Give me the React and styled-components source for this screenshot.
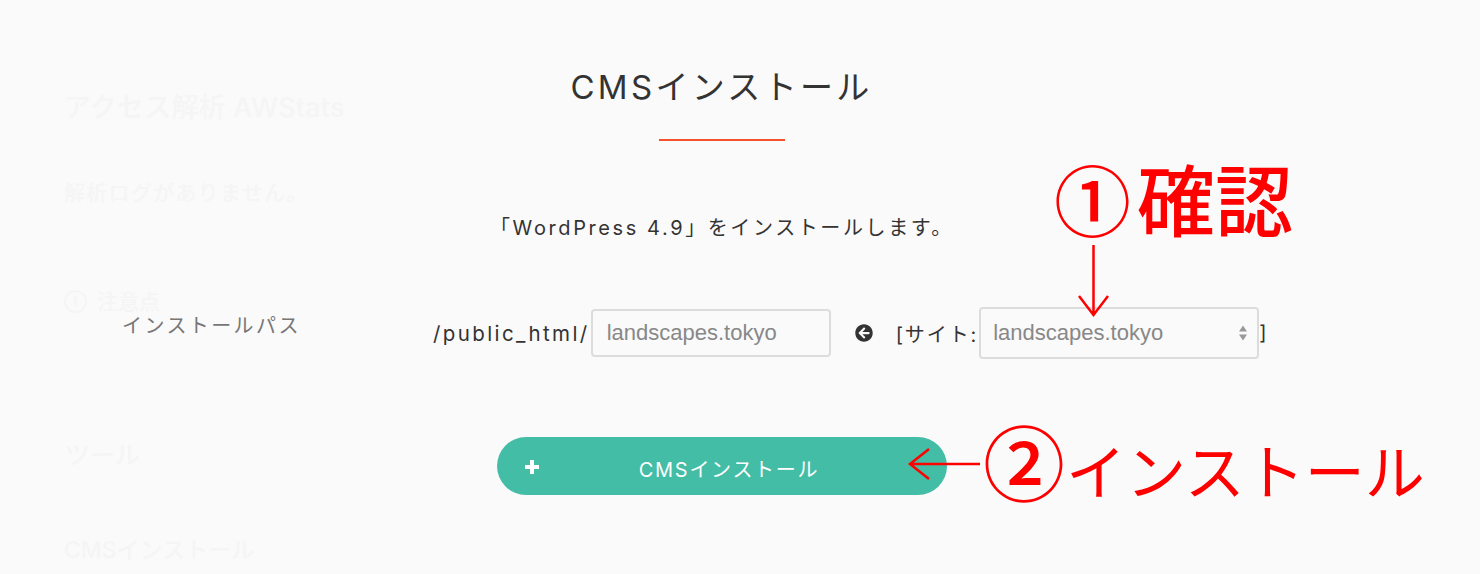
import React from 'react'
import styled, { createGlobalStyle } from 'styled-components'
import { FaArrowCircleLeft } from 'react-icons/fa'

const FONT = '"Noto Sans CJK JP", "Inter", sans-serif'
const LATIN = '"Inter", "Noto Sans CJK JP", sans-serif'
const HELVETICA = '"Liberation Sans", "Noto Sans CJK JP", sans-serif'

const GlobalStyle = createGlobalStyle`
  html, body {
    margin: 0;
    padding: 0;
    background: #fafafa;
  }
  * {
    box-sizing: border-box;
  }
`

const Page = styled.div`
  position: relative;
  width: 1480px;
  height: 574px;
  overflow: hidden;
  background: #fafafa;
  font-family: ${LATIN};
  color: #333;
`

// sidebar that shows through the white overlay
const Backdrop = styled.div`
  position: absolute;
  top: 0;
  left: 64px;
  color: #f5f5f5;
  font-weight: 500;
`

const GhostLine = styled.div`
  position: absolute;
  left: ${p => p.$left || 0}px;
  top: ${p => p.$top}px;
  font-size: ${p => p.$size}px;
  line-height: 30px;
  letter-spacing: ${p => p.$spacing || 0}px;
  white-space: nowrap;
`

const GhostBadge = styled.div`
  position: absolute;
  left: 0;
  top: 290px;
  display: flex;
  align-items: center;
  justify-content: center;
  width: 23px;
  height: 23px;
  border: 2px solid #f5f5f5;
  border-radius: 50%;
  font-size: 15px;
  font-weight: 700;
`

const Dialog = styled.div`
  position: relative;
  display: flex;
  flex-direction: column;
  align-items: center;
  width: 1444px;
  padding-top: 66px;
`

const Title = styled.h2`
  margin: 0 0 0 -1px;
  font-size: 33px;
  font-weight: 400;
  line-height: 42px;
  letter-spacing: 3.3px;
  color: #333;
`

const Rule = styled.div`
  width: 126px;
  height: 2px;
  margin-top: 31px;
  background: #f4512c;
`

const Message = styled.p`
  margin: 73px 0 0;
  font-size: 20px;
  line-height: 28px;
  letter-spacing: 2.6px;
  color: #333;
`

const FormRow = styled.div`
  align-self: stretch;
  display: flex;
  align-items: center;
  height: 52px;
  margin-top: 65px;
  padding-left: 122px;
`

const FieldLabel = styled.div`
  width: 311px;
  margin-bottom: 18px;
  font-size: 20px;
  letter-spacing: 2.4px;
  color: #777;
`

const PathText = styled.span`
  font-size: ${p => p.$size || 20}px;
  letter-spacing: ${p => p.$spacing}px;
  color: #333;
  white-space: nowrap;
`

const TextInput = styled.input`
  width: 240px;
  height: 48px;
  margin-left: 1px;
  padding: 0 14px;
  border: 2px solid #dcdcdc;
  border-radius: 4px;
  background: #fafafa;
  font-family: ${HELVETICA};
  font-size: 22px;
  color: #888;
  outline: none;
`

const BackIcon = styled(FaArrowCircleLeft)`
  width: 18px;
  height: 18px;
  margin: 0 23px 0 24px;
  flex: none;
  color: #333;
`

const SelectBox = styled.div`
  display: flex;
  align-items: center;
  justify-content: space-between;
  width: 280px;
  height: 52px;
  margin-left: 1px;
  padding: 0 9px 0 12px;
  border: 2px solid #dcdcdc;
  border-radius: 4px;
  font-family: ${HELVETICA};
  font-size: 22px;
  color: #888;
`

const Updown = styled.svg`
  width: 10px;
  height: 18px;
`

const InstallButton = styled.button`
  position: relative;
  display: flex;
  align-items: center;
  justify-content: center;
  width: 450px;
  height: 58px;
  margin-top: 78px;
  padding: 5px 0 0 14px;
  border: 0;
  border-radius: 29px;
  background: #43bda6;
  color: #fff;
  font-family: ${LATIN};
  font-size: 20px;
  font-weight: 400;
  letter-spacing: 1.7px;
`

const PlusIcon = styled.svg`
  position: absolute;
  left: 27px;
  top: 22px;
  width: 16px;
  height: 16px;
`

// red notes someone drew on top of the screenshot
const Note = styled.div`
  position: absolute;
  left: ${p => p.$left}px;
  top: ${p => p.$top}px;
  display: flex;
  align-items: baseline;
  font-family: ${FONT};
  font-size: ${p => p.$size}px;
  font-weight: ${p => p.$weight};
  line-height: 1;
  color: #f00;
  white-space: nowrap;
`

const NoteMark = styled.span`
  font-size: ${p => p.$size}px;
  font-weight: 500;
  margin-right: ${p => p.$gap}px;
`

const Arrow = styled.svg`
  position: absolute;
  left: ${p => p.$left}px;
  top: ${p => p.$top}px;
  overflow: visible;
`

export default function App() {
  return (
    <Page>
      <GlobalStyle />
      <Backdrop>
        <GhostLine $top={93} $size={27} $spacing={0.2}>アクセス解析 AWStats</GhostLine>
        <GhostLine $top={178} $size={21} $spacing={1.3}>解析ログがありません。</GhostLine>
        <GhostBadge>!</GhostBadge>
        <GhostLine $left={33} $top={287} $size={21}>注意点</GhostLine>
        <GhostLine $left={1} $top={440} $size={25}>ツール</GhostLine>
        <GhostLine $top={535} $size={23}>CMSインストール</GhostLine>
      </Backdrop>
      <Dialog>
        <Title>CMSインストール</Title>
        <Rule />
        <Message>「WordPress 4.9」をインストールします。</Message>
        <FormRow>
          <FieldLabel>インストールパス</FieldLabel>
          <PathText $size={20.5} $spacing={2.4}>/public_html/</PathText>
          <TextInput readOnly value="landscapes.tokyo" />
          <BackIcon />
          <PathText $spacing={1.9}>[サイト:</PathText>
          <SelectBox>
            landscapes.tokyo
            <Updown viewBox="0 0 10 18">
              <path d="M5 1.5 9 7.5H1zM5 16.5 1 10.5h8z" fill="#999" />
            </Updown>
          </SelectBox>
          <PathText $spacing={0}>]</PathText>
        </FormRow>
        <InstallButton>
          <PlusIcon viewBox="0 0 16 16">
            <path d="M8 1v14M1 8h14" stroke="#fff" strokeWidth="4" />
          </PlusIcon>
          CMSインストール
        </InstallButton>
      </Dialog>
      <Note $left={1054} $top={158} $size={78} $weight={500}>
        <NoteMark $size={77} $gap={6}>①</NoteMark>確認
      </Note>
      <Note $left={983} $top={419} $size={60} $weight={400}>
        <NoteMark $size={82} $gap={1}>②</NoteMark>インストール
      </Note>
      <Arrow $left={1078} $top={245} width="32" height="72" viewBox="0 0 32 72">
        <path d="M15.5 0v70M1 51l14.5 19L30 51" fill="none" stroke="#f00" strokeWidth="2.5" />
      </Arrow>
      <Arrow $left={908} $top={448} width="72" height="34" viewBox="0 0 72 34">
        <path d="M72 16H2M21 1 2 16l19 15" fill="none" stroke="#f00" strokeWidth="2.5" />
      </Arrow>
    </Page>
  )
}
